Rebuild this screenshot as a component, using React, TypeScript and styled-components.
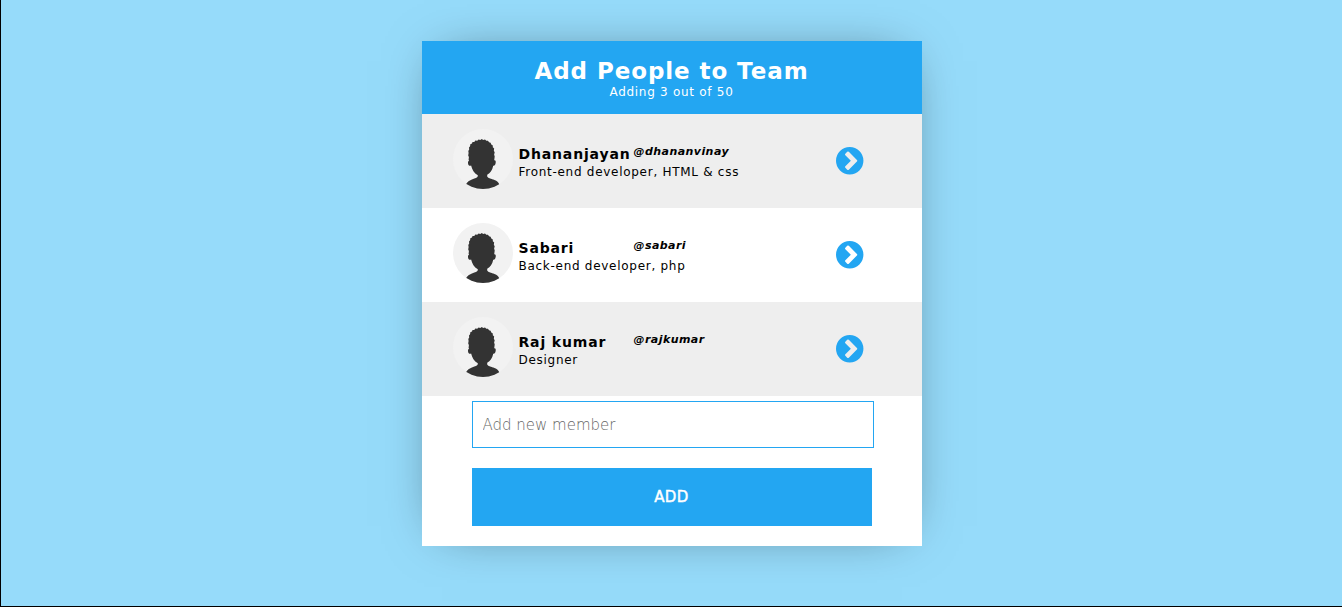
import React, { useState } from "react";
import styled, { createGlobalStyle } from "styled-components";

const BLUE = "#23a6f2";

const GlobalStyle = createGlobalStyle`
  body {
    margin: 0;
    font-family: "DejaVu Sans", sans-serif;
    font-size: 16px;
    letter-spacing: 0.045em;
    color: #000;
  }
`;

const Page = styled.main`
  box-sizing: border-box;
  min-height: 100vh;
  padding: 41px 0 60px;
  border-left: 1px solid #000;
  border-bottom: 1px solid #000;
  background: #96dbfa;
`;

const Card = styled.section`
  max-width: 500px;
  margin: 0 auto;
  background: #fff;
  box-shadow: 0 0 50px -20px rgba(0, 0, 0, 0.55);
`;

const Header = styled.header`
  padding: 17px 0 14px;
  background: ${BLUE};
  color: #fff;
  text-align: center;
`;

const Title = styled.h1`
  margin: 0;
  font-size: 23px;
  line-height: 26px;
  font-weight: 700;
  letter-spacing: 0.04em;
`;

const Subtitle = styled.p`
  margin: 0;
  font-size: 12px;
  line-height: 16px;
`;

const List = styled.ul`
  margin: 0;
  padding: 0;
  list-style: none;
`;

const Item = styled.li`
  display: flex;
  align-items: center;
  padding: 15px 58px 19px 31px;
  background: #fff;

  &:nth-child(odd) {
    background: #eee;
  }
`;

const Details = styled.div`
  flex: 1;
  margin-left: 6px;
  padding-top: 8px;
`;

const NameLine = styled.div`
  display: grid;
  grid-template-columns: 115px 1fr;
  line-height: 18px;
`;

const Name = styled.h2`
  margin: 0;
  font-size: 14px;
  font-weight: 700;
  letter-spacing: 0.06em;
`;

const Handle = styled.em`
  font-size: 11px;
  line-height: 14px;
  font-weight: 700;
  letter-spacing: 0.04em;
`;

const Role = styled.p`
  margin: 0;
  font-size: 12px;
  line-height: 18px;
`;

const OpenButton = styled.button`
  display: flex;
  padding: 4px 0 0;
  border: 0;
  background: none;
  color: ${BLUE};
  cursor: pointer;
`;

const Form = styled.form`
  padding: 5px 50px 20px;
`;

const Field = styled.input`
  display: block;
  box-sizing: border-box;
  width: calc(100% + 2px);
  height: 47px;
  padding: 0 10px;
  border: 1px solid ${BLUE};
  border-radius: 0;
  background: #fff;
  font-family: inherit;
  font-size: 15px;
  font-weight: 200;
  letter-spacing: normal;
  outline: none;

  &::placeholder {
    color: #666;
  }
`;

const AddButton = styled.button`
  display: block;
  width: 100%;
  height: 58px;
  margin-top: 20px;
  border: 0;
  background: ${BLUE};
  color: #fff;
  font-family: inherit;
  font-size: 15px;
  letter-spacing: 0.03em;
  -webkit-text-stroke: 0.03em currentColor;
  cursor: pointer;
`;

const Avatar = () => (
  <svg width="60" height="60" viewBox="0 0 60 60" aria-hidden="true">
    <defs>
      <clipPath id="avatar-clip">
        <circle cx="30" cy="30" r="30" />
      </clipPath>
    </defs>
    <circle cx="30" cy="30" r="30" fill="#f2f2f2" />
    <path
      clipPath="url(#avatar-clip)"
      fill="#333"
      d="M16.2 32 L15.6 31 L15.9 28 L15.2 26.5 L15.6 24 L15.3 22 L16.2 20.5 L16 18.5 L17.1 17.3 L17.3 15.3 L19 14.6 L19.5 13 L21.3 12.9 L22.3 11.4 L24.2 11.7 L25.6 10.6 L27.3 11 L28.8 10.1 L30.2 11 L32 10.5 L33.3 11.8 L35 11.7 L36 13.3 L37.6 13.7 L38.3 15.4 L39.8 16.4 L39.8 18.2 L41.2 19.5 L40.8 21.5 L41.7 23.4 L41.1 25.5 L41.7 27.6 L41.2 31.3 C42.8 31 43 32.6 42.6 34.3 C42.3 36 41.5 37 40.2 36.7 C39.4 41 37.3 44.1 34.2 45.7 L34.2 47.5 C35 49.3 38.5 49.8 41.5 51 C44 52 45.6 53.4 46.3 55.5 L46.3 60 L13 60 L13 55.2 C14 53 16.5 51.3 19.5 50.2 C22.2 49.2 24.2 49 24.8 47.2 L24.8 46.2 C21 44.2 19.2 41 18.1 36.6 C16.5 37.2 15.4 36.6 15.1 34.8 C14.8 33 15 31.8 16.2 32 Z"
    />
  </svg>
);

const ChevronCircle = () => (
  <svg width="28" height="28" viewBox="0 0 1568 1568" aria-hidden="true">
    <path
      fill="currentColor"
      fillRule="evenodd"
      d="M717 1267l454-454q19-19 19-45t-19-45l-454-454q-19-19-45-19t-45 19l-102 102q-19 19-19 45t19 45l307 307-307 307q-19 19-19 45t19 45l102 102q19 19 45 19t45-19zM1536 768a768 768 0 1 1-1536 0a768 768 0 1 1 1536 0z"
    />
  </svg>
);

const members = [
  { name: "Dhananjayan", handle: "@dhananvinay", role: "Front-end developer, HTML & css" },
  { name: "Sabari", handle: "@sabari", role: "Back-end developer, php" },
  { name: "Raj kumar", handle: "@rajkumar", role: "Designer" },
];

export default function App() {
  const [value, setValue] = useState("");

  return (
    <>
      <GlobalStyle />
      <Page>
        <Card>
          <Header>
            <Title>Add People to Team</Title>
            <Subtitle>Adding 3 out of 50</Subtitle>
          </Header>
          <List>
            {members.map((m) => (
              <Item key={m.handle}>
                <Avatar />
                <Details>
                  <NameLine>
                    <Name>{m.name}</Name>
                    <Handle>{m.handle}</Handle>
                  </NameLine>
                  <Role>{m.role}</Role>
                </Details>
                <OpenButton type="button" aria-label={`Open ${m.name}`}>
                  <ChevronCircle />
                </OpenButton>
              </Item>
            ))}
          </List>
          <Form onSubmit={(e) => e.preventDefault()}>
            <Field
              type="text"
              aria-label="Add new member"
              placeholder="Add new member"
              value={value}
              onChange={(e) => setValue(e.target.value)}
            />
            <AddButton type="submit">ADD</AddButton>
          </Form>
        </Card>
      </Page>
    </>
  );
}
